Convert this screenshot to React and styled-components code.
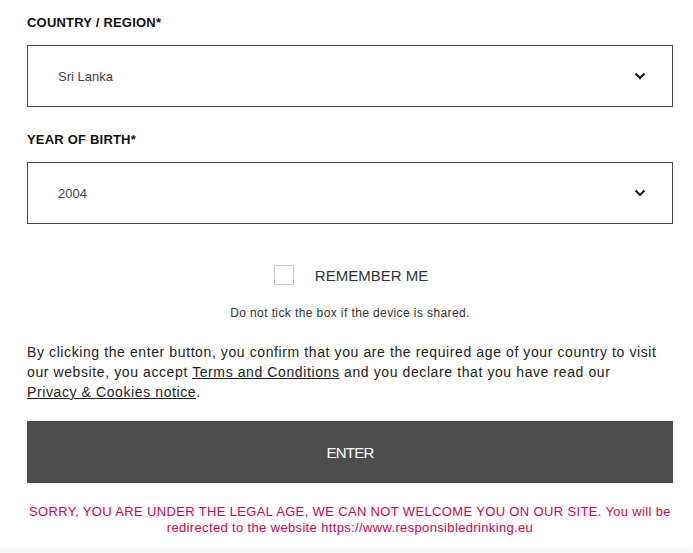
import React from 'react';
import styled, { createGlobalStyle } from 'styled-components';

const GlobalStyle = createGlobalStyle`
	html, body {
		margin: 0;
		padding: 0;
		background: #fff;
	}
	body {
		font-family: 'Liberation Sans', Arial, sans-serif;
		color: #333;
	}
`;

const Page = styled.div`
	width: 693px;
	height: 553px;
	overflow: hidden;
	background: linear-gradient(to bottom, #fff 0, #fff 543px, #f5f5f5 553px);
`;

const Form = styled.form`
	display: flex;
	flex-direction: column;
	padding: 14px 20px 0 27px;
`;

const Label = styled.label`
	font-size: 13px;
	font-weight: 700;
	color: #111;
	line-height: 18px;
	letter-spacing: 0.2px;
	margin-bottom: 13px;
`;

const SelectBox = styled.div`
	height: 60px;
	border: 1px solid #4a4a4a;
	border-width: 1.5px;
	display: flex;
	align-items: center;
	justify-content: space-between;
	padding: 0 26px 0 30px;
	margin-bottom: 24px;
	font-size: 13px;
	color: #444;
	cursor: pointer;
`;

const Remember = styled.div`
	display: flex;
	justify-content: center;
	align-items: center;
	gap: 21px;
	margin-top: 17px;
	margin-left: 2px;
`;

const Box = styled.span`
	width: 18px;
	height: 18px;
	border: 1px solid #c8c8c8;
`;

const RememberText = styled.span`
	font-size: 15px;
	color: #333;
`;

const Hint = styled.p`
	margin: 21px 0 0;
	text-align: center;
	font-size: 12px;
	letter-spacing: 0.4px;
	color: #333;
`;

const Legal = styled.p`
	margin: 22px 0 0;
	font-size: 14px;
	line-height: 20px;
	letter-spacing: 0.6px;
	color: #222;
	a {
		color: #222;
		text-decoration: underline;
	}
`;

const Enter = styled.button`
	margin-top: 19px;
	height: 62px;
	border: none;
	background: #4d4d4d;
	color: #fff;
	font-family: inherit;
	font-size: 15px;
	letter-spacing: -0.8px;
	cursor: pointer;
`;

const Error = styled.p`
	margin: 21px 0 0;
	text-align: center;
	font-size: 13px;
	line-height: 16px;
	letter-spacing: 0.35px;
	color: #d4004f;
`;

const Chevron = () => (
	<svg width="12" height="8" viewBox="0 0 12 8">
		<path d="M1.5 1.5 L6 6 L10.5 1.5" fill="none" stroke="#111" strokeWidth="2" />
	</svg>
);

const Select = ({ value }) => (
	<SelectBox>
		<span>{value}</span>
		<Chevron />
	</SelectBox>
);

const App = () => {
	return (
		<Page>
			<GlobalStyle />
			<Form onSubmit={(e) => e.preventDefault()}>
				<Label>COUNTRY / REGION*</Label>
				<Select value="Sri Lanka" />

				<Label>YEAR OF BIRTH*</Label>
				<Select value="2004" />

				<Remember>
					<Box />
					<RememberText>REMEMBER ME</RememberText>
				</Remember>
				<Hint>Do not tick the box if the device is shared.</Hint>

				<Legal>
					By clicking the enter button, you confirm that you are the required age of your
					country to visit our website, you accept <a href="#">Terms and Conditions</a> and
					you declare that you have read our
					<br />
					<a href="#">Privacy &amp; Cookies notice</a>.
				</Legal>

				<Enter type="submit">ENTER</Enter>

				<Error>
					SORRY, YOU ARE UNDER THE LEGAL AGE, WE CAN NOT WELCOME YOU ON OUR SITE. You will be
					redirected to the website https://www.responsibledrinking.eu
				</Error>
			</Form>
		</Page>
	);
};

export default App;
